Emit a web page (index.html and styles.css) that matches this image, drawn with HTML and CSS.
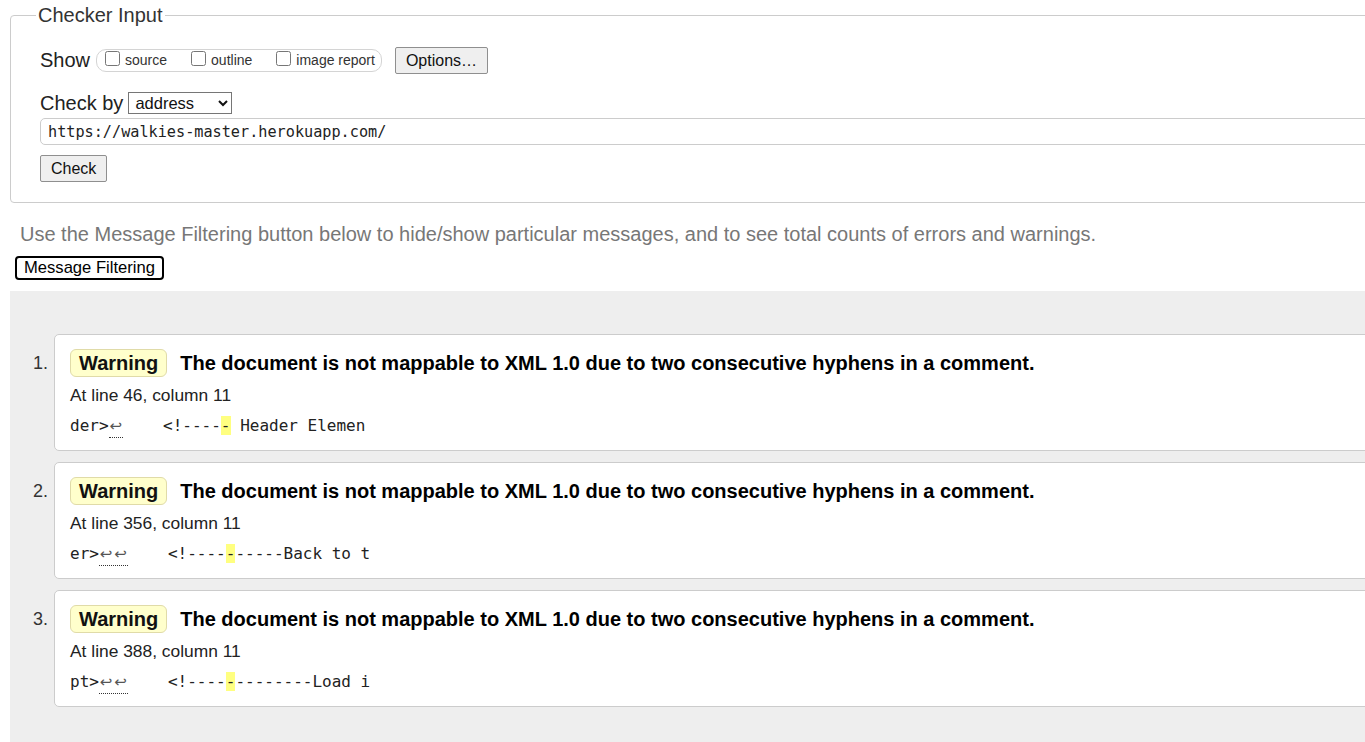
FILE: index.html
```html
<!DOCTYPE html>
<html lang="en">
<head>
<meta charset="utf-8">
<title>Nu Html Checker</title>
<link rel="stylesheet" href="styles.css">
</head>
<body>
<div class="page">
  <fieldset class="checker">
    <legend class="checker-legend">Checker Input</legend>
    <div class="row show-row">
      <span class="row-label">Show</span>
      <div class="opts">
        <label class="opt"><input class="opt-box" type="checkbox"><span>source</span></label>
        <label class="opt"><input class="opt-box" type="checkbox"><span>outline</span></label>
        <label class="opt"><input class="opt-box" type="checkbox"><span>image report</span></label>
      </div>
      <button class="btn options-btn" type="button">Options…</button>
    </div>
    <div class="row by-row">
      <span class="row-label">Check by</span>
      <select class="by-select"><option>address</option></select>
    </div>
    <input class="url" type="text" value="https://walkies-master.herokuapp.com/">
    <button class="btn check-btn" type="button">Check</button>
  </fieldset>

  <p class="hint">Use the Message Filtering button below to hide/show particular messages, and to see total counts of errors and warnings.</p>
  <button class="filter-btn" type="button">Message Filtering</button>

  <div class="results">
    <ol class="messages">
      <li class="msg">
        <span class="num">1.</span>
        <div class="card">
          <p class="head"><strong class="badge">Warning</strong><span class="head-text">The document is not mappable to XML 1.0 due to two consecutive hyphens in a comment.</span></p>
          <p class="loc">At line 46, column 11</p>
          <p class="extract"><code class="code">der&gt;<span class="lf"><span class="lf-glyph">↩</span></span>    &lt;!----<b class="hl">-</b> Header Elemen</code></p>
        </div>
      </li>
      <li class="msg">
        <span class="num">2.</span>
        <div class="card">
          <p class="head"><strong class="badge">Warning</strong><span class="head-text">The document is not mappable to XML 1.0 due to two consecutive hyphens in a comment.</span></p>
          <p class="loc">At line 356, column 11</p>
          <p class="extract"><code class="code">er&gt;<span class="lf"><span class="lf-glyph">↩</span><span class="lf-glyph">↩</span></span>    &lt;!----<b class="hl">-</b>-----Back to t</code></p>
        </div>
      </li>
      <li class="msg">
        <span class="num">3.</span>
        <div class="card">
          <p class="head"><strong class="badge">Warning</strong><span class="head-text">The document is not mappable to XML 1.0 due to two consecutive hyphens in a comment.</span></p>
          <p class="loc">At line 388, column 11</p>
          <p class="extract"><code class="code">pt&gt;<span class="lf"><span class="lf-glyph">↩</span><span class="lf-glyph">↩</span></span>    &lt;!----<b class="hl">-</b>--------Load i</code></p>
        </div>
      </li>
    </ol>
  </div>
</div>
</body>
</html>
```

FILE: styles.css
```css
html, body {
  margin: 0;
  padding: 0;
  background: #fff;
  overflow: hidden;
}

body {
  font-family: "Liberation Sans", Arial, sans-serif;
  color: #222;
}

.page {
  width: 1440px;
}

/* ---------- Checker input fieldset ---------- */
.checker {
  margin: 3px 0 0 10px;
  padding: 0 0 20px 29px;
  border: 1px solid #ccc;
  border-radius: 4px;
  min-width: 0;
}

.checker-legend {
  margin-left: -4px;
  padding: 0 2px;
  font-size: 20px;
  line-height: 24px;
  color: #333;
}

.row {
  display: flex;
  align-items: center;
}

.row-label {
  font-size: 20px;
  color: #222;
}

.show-row {
  margin-top: 20px;
  height: 27px;
}

.opts {
  display: flex;
  align-items: center;
  gap: 24px;
  box-sizing: border-box;
  height: 23px;
  margin-left: 6px;
  padding: 0 6px 0 8px;
  border: 1px solid #d4d4d4;
  border-radius: 10px;
}

.opt {
  display: flex;
  align-items: center;
  font-size: 14px;
  line-height: 21px;
  color: #333;
}

.opt-box {
  width: 15px;
  height: 15px;
  margin: -5px 5px 0 0;
}

.btn {
  box-sizing: border-box;
  height: 27px;
  padding: 0 10px;
  font-family: "Liberation Sans", Arial, sans-serif;
  font-size: 16px;
  color: #111;
  background: #efefef;
  border: 1px solid #8f8f8f;
  border-radius: 2px;
}

.options-btn {
  margin-left: 13px;
}

.by-row {
  margin-top: 18px;
  height: 22px;
}

.by-select {
  box-sizing: border-box;
  width: 104px;
  height: 22px;
  margin-left: 5px;
  padding: 0 0 0 2px;
  font-family: "Liberation Sans", Arial, sans-serif;
  font-size: 16.5px;
  color: #111;
  background: #fff;
  border: 1px solid #767676;
  border-radius: 0;
}

.url {
  display: block;
  box-sizing: border-box;
  width: 100%;
  height: 27px;
  margin: 4px 0 0;
  padding: 0 7px;
  font-family: "DejaVu Sans Mono", "Liberation Mono", monospace;
  font-size: 15.2px;
  color: #222;
  background: #fff;
  border: 1px solid #ccc;
  border-radius: 5px;
}

.check-btn {
  display: block;
  margin-top: 10px;
}

/* ---------- Hint + filter button ---------- */
.hint {
  margin: 19px 0 0 20px;
  font-size: 20px;
  line-height: 24px;
  color: #777;
}

.filter-btn {
  display: block;
  box-sizing: border-box;
  height: 24px;
  margin: 10px 0 0 15px;
  padding: 0 7px;
  font-family: "Liberation Sans", Arial, sans-serif;
  font-size: 16.6px;
  color: #000;
  background: #fff;
  border: 2px solid #000;
  border-radius: 4px;
}

/* ---------- Results ---------- */
.results {
  margin: 11px 0 0 10px;
  padding: 43px 0 40px;
  background: #eee;
}

.messages {
  display: flex;
  flex-direction: column;
  gap: 11px;
  margin: 0;
  padding: 0;
  list-style: none;
}

.msg {
  display: flex;
  align-items: flex-start;
}

.num {
  box-sizing: border-box;
  flex: 0 0 44px;
  margin-top: 15px;
  padding-right: 6px;
  text-align: right;
  font-size: 18px;
  line-height: 28px;
  color: #333;
}

.card {
  flex: 1;
  padding: 14px 15px 12px;
  background: #fff;
  border: 1px solid #ccc;
  border-radius: 5px;
}

.head {
  display: flex;
  align-items: center;
  gap: 13px;
  height: 28px;
  margin: 0;
}

.badge {
  box-sizing: border-box;
  height: 28px;
  padding: 0 8px;
  font-size: 20px;
  line-height: 26px;
  font-weight: bold;
  color: #111;
  background: #ffc;
  border: 1px solid #e0dba8;
  border-radius: 6px;
}

.head-text {
  font-size: 20px;
  font-weight: bold;
  color: #000;
}

.loc {
  margin: 6px 0 0;
  font-size: 17.4px;
  line-height: 24px;
  color: #222;
}

.extract {
  margin: 7px 0 0;
  line-height: 24px;
}

.code {
  font-family: "DejaVu Sans Mono", "Liberation Mono", monospace;
  font-size: 16px;
  color: #222;
  white-space: pre;
}

.lf {
  margin-right: 1.5px;
  padding-bottom: 1.5px;
  border-bottom: 1px dotted #333;
}

.lf-glyph {
  display: inline-block;
  width: 14.5px;
  text-align: center;
  font-family: "DejaVu Sans", sans-serif;
  font-size: 15px;
  line-height: 1;
  color: #555;
}

.hl {
  font-weight: normal;
  background: #ffff80;
}
```
